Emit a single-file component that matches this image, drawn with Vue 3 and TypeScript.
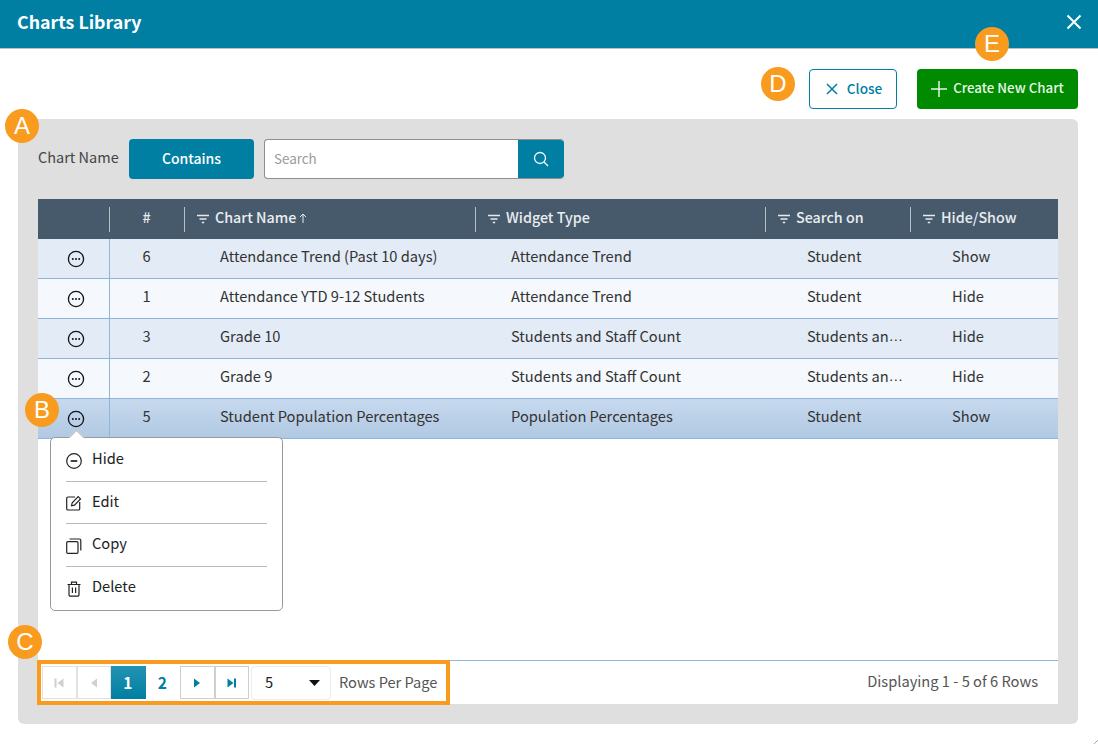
<script setup lang="ts">
interface Row { id: number; name: string; widget: string; search: string; more?: boolean; vis: string; selected?: boolean }
const rows: Row[] = [
  { id: 6, name: 'Attendance Trend (Past 10 days)', widget: 'Attendance Trend', search: 'Student', vis: 'Show' },
  { id: 1, name: 'Attendance YTD 9-12 Students', widget: 'Attendance Trend', search: 'Student', vis: 'Hide' },
  { id: 3, name: 'Grade 10', widget: 'Students and Staff Count', search: 'Students an', more: true, vis: 'Hide' },
  { id: 2, name: 'Grade 9', widget: 'Students and Staff Count', search: 'Students an', more: true, vis: 'Hide' },
  { id: 5, name: 'Student Population Percentages', widget: 'Population Percentages', search: 'Student', vis: 'Show', selected: true },
]
const headers = [
  { label: 'Chart Name', sort: true },
  { label: 'Widget Type' },
  { label: 'Search on' },
  { label: 'Hide/Show' },
]
const badges = ['a', 'b', 'c', 'd', 'e']
</script>

<template>
  <div class="page">
    <header class="titlebar">
      <h1 class="title">Charts Library</h1>
      <svg class="x" width="16" height="16" viewBox="0 0 16 16"><path d="M1.5 1.5l13 13M14.5 1.5l-13 13" stroke="#fff" stroke-width="2" fill="none"/></svg>
    </header>

    <div class="actions">
      <button class="btn-close">
        <svg width="12" height="12" viewBox="0 0 12 12"><path d="M1 1l10 10M11 1L1 11" stroke="#007fa3" stroke-width="1.5" fill="none"/></svg>
        <span>Close</span>
      </button>
      <button class="btn-create">
        <svg width="16" height="16" viewBox="0 0 16 16"><path d="M8 0v16M0 8h16" stroke="#e8f4e8" stroke-width="1.5" fill="none"/></svg>
        <span>Create New Chart</span>
      </button>
    </div>

    <section class="panel">
      <div class="filter">
        <span class="filter-label">Chart Name</span>
        <button class="contains">Contains</button>
        <div class="search">
          <span class="placeholder">Search</span>
          <span class="search-btn">
            <svg width="16" height="16" viewBox="0 0 16 16" fill="none" stroke="#fff" stroke-width="1.3"><circle cx="7" cy="7" r="5.5"/><path d="M11 11l4 4"/></svg>
          </span>
        </div>
      </div>

      <div class="table">
        <div class="thead">
          <div class="th th-first"></div>
          <div class="th th-num"><span class="sep"></span>#</div>
          <div v-for="h in headers" :key="h.label" class="th th-label">
            <span class="sep"></span>
            <svg class="filter-ico" width="12" height="10" viewBox="0 0 12 10" fill="none" stroke="#e6eaee" stroke-width="1.3"><path d="M0 1.5h12M2.5 5h7M4.8 8.5h2.4"/></svg>
            <span>{{ h.label }}</span>
            <svg v-if="h.sort" class="sort-ico" width="8" height="10" viewBox="0 0 8 10" fill="none" stroke="#e6eaee" stroke-width="1"><path d="M4 10V1M1 4l3-3 3 3"/></svg>
          </div>
        </div>

        <div v-for="(r, i) in rows" :key="r.id" class="tr" :class="{ odd: i % 2 === 0, selected: r.selected }">
          <div class="td td-first">
            <svg width="18" height="18" viewBox="0 0 18 18" fill="none"><circle cx="9" cy="9" r="7.6" stroke="#111" stroke-width="1.3"/><circle cx="5.8" cy="9" r="1" fill="#111"/><circle cx="9" cy="9" r="1" fill="#111"/><circle cx="12.2" cy="9" r="1" fill="#111"/></svg>
          </div>
          <div class="td td-num">{{ r.id }}</div>
          <div class="td td-name">{{ r.name }}</div>
          <div class="td td-widget">{{ r.widget }}</div>
          <div class="td td-search">{{ r.search }}<span v-if="r.more" class="ell">…</span></div>
          <div class="td td-vis">{{ r.vis }}</div>
        </div>

        <div class="spacer"></div>

        <div class="tfoot">
          <div class="pager">
            <span class="pg dis">
              <svg width="10" height="10" viewBox="0 0 10 10" fill="#d0d0d0"><rect x="0.5" y="0.5" width="2" height="9"/><path d="M9.5 0.5v9L3.5 5z"/></svg>
            </span>
            <span class="pg dis">
              <svg width="10" height="10" viewBox="0 0 10 10" fill="#d0d0d0"><path d="M8 0.5v9L2 5z"/></svg>
            </span>
            <span class="num active">1</span>
            <span class="num">2</span>
            <span class="pg on">
              <svg width="10" height="10" viewBox="0 0 10 10" fill="#007fa3"><path d="M2 0.5v9L8 5z"/></svg>
            </span>
            <span class="pg on">
              <svg width="10" height="10" viewBox="0 0 10 10" fill="#007fa3"><path d="M0.5 0.5v9l6-4.500z"/><rect x="7" y="0.5" width="2" height="9"/></svg>
            </span>
            <span class="select">
              <span>5</span>
              <svg width="11" height="6" viewBox="0 0 11 6" fill="#111"><path d="M0 0h11L5.500 6z"/></svg>
            </span>
            <span class="rpp">Rows Per Page</span>
          </div>
          <span class="displaying">Displaying 1 - 5 of 6 Rows</span>
        </div>

        <div class="menu">
          <span class="arrow"></span>
          <div class="mi">
            <svg width="16" height="16" viewBox="0 0 16 16" fill="none" stroke="#222" stroke-width="1.2"><circle cx="8" cy="8" r="7.300"/><path d="M4.700 8h6.600" stroke-width="1.700"/></svg>
            <span>Hide</span>
          </div>
          <div class="mi edit">
            <svg width="16" height="16" viewBox="0 0 16 16" fill="none" stroke="#222" stroke-width="1.2"><path d="M9 2H2A1.300 1.300 0 0 0 .7 3.300v10.400A1.300 1.300 0 0 0 2 15h10.400a1.300 1.300 0 0 0 1.300-1.300V7"/><path d="M5.500 10.800l.7-3 6-6.200 2.300 2.300-6 6.200z"/></svg>
            <span>Edit</span>
          </div>
          <div class="mi">
            <svg width="16" height="16" viewBox="0 0 16 16" fill="none" stroke="#222" stroke-width="1.2"><rect x=".7" y="3.600" width="11.300" height="11.800" rx="1.200"/><path d="M3.500 1h10a1.300 1.300 0 0 1 1.300 1.300v10.300"/></svg>
            <span>Copy</span>
          </div>
          <div class="mi">
            <svg width="16" height="16" viewBox="0 0 16 16" fill="none" stroke="#222" stroke-width="1.2"><path d="M1.500 3.500h13M5.500 3.500V1.200h5v2.300M3 3.500v10.300a1.400 1.400 0 0 0 1.400 1.400h7.200a1.400 1.400 0 0 0 1.400-1.400V3.500M6.400 6.500v5.600M9.600 6.500v5.600"/></svg>
            <span>Delete</span>
          </div>
        </div>
      </div>
    </section>

    <div class="highlight"></div>
    <span v-for="b in badges" :key="b" class="badge" :class="b">{{ b.toUpperCase() }}</span>
    <svg class="grip" width="4" height="4" viewBox="0 0 4 4"><path d="M0 4L4 0" stroke="#aaa" stroke-width="1"/></svg>
  </div>
</template>

<style>
html, body { margin: 0; background: #fff; }
</style>

<style scoped>
.page {
  position: relative;
  width: 1098px;
  height: 744px;
  overflow: hidden;
  background: #fff;
  font-family: "Noto Sans CJK SC", "Noto Sans", sans-serif;
  font-size: 14.67px;
  color: #333;
  box-sizing: border-box;
}
.titlebar {
  background: #007fa3;
  border-bottom: 1px solid #bdbdbd;
  display: flex;
  align-items: center;
  justify-content: space-between;
  padding: 0 16px 3px 17px;
  height: 45px;
}
.title { margin: 0 0 1px; font-size: 17.8px; font-weight: 700; color: #fff; line-height: 1; }
.x { display: block; margin-top: -2px; }
.actions {
  display: flex;
  justify-content: flex-end;
  gap: 20px;
  padding: 20px 20px 10px 0;
}
button { font-family: inherit; cursor: pointer; }
.btn-close {
  width: 88px; height: 40px;
  box-sizing: border-box;
  background: #fff;
  border: 1px solid #007fa3;
  border-radius: 4px;
  color: #007fa3;
  font-size: 13.6px;
  font-weight: 500;
  display: flex; align-items: center; justify-content: center; gap: 9px;
  padding: 0 0 3px 2px;
}
.btn-close svg { margin-top: 3px; }
.btn-create {
  width: 161px; height: 40px;
  box-sizing: border-box;
  background: #008a00;
  border: none;
  border-radius: 4px;
  color: #e8f7e8;
  font-size: 13.3px;
  font-weight: 500;
  display: flex; align-items: center; justify-content: center; gap: 6px;
  padding: 0 0 4px;
}
.btn-create svg { margin-top: 4px; }
.panel {
  margin: 0 20px 0 18px;
  height: 605px;
  box-sizing: border-box;
  background: #dfdfdf;
  border-radius: 6px;
  padding: 20px;
  display: flex;
  flex-direction: column;
  gap: 20px;
}
.filter { display: flex; align-items: center; height: 40px; }
.filter-label { width: 81px; white-space: nowrap; color: #444; margin-right: 10px; margin-top: -5px; font-size: 14.5px; }
.contains {
  width: 125px; height: 40px;
  background: #007fa3; border: none; border-radius: 4px;
  color: #fff; font-size: 14px; font-weight: 500; padding: 0 0 2px;
  margin-right: 10px;
}
.search {
  width: 300px; height: 40px; box-sizing: border-box;
  display: flex; align-items: stretch;
  background: #fff;
  border: 1px solid #8e8e8e;
  border-right: none;
  border-radius: 4px;
  overflow: hidden;
}
.placeholder { flex: 1; line-height: 36px; padding-left: 9px; color: #9a9a9a; font-size: 13.4px; }
.search-btn {
  width: 46px; background: #007fa3;
  display: flex; align-items: center; justify-content: center;
  margin: -1px 0;
}
.table {
  position: relative;
  flex: 1;
  background: #fff;
  display: flex;
  flex-direction: column;
}
.thead, .tr {
  display: grid;
  grid-template-columns: 72px 75px 291px 290px 145px 147px;
}
.thead { height: 40px; background: #475a6c; color: #e9edf0; font-weight: 500; font-size: 14.3px; }
.th { position: relative; display: flex; align-items: center; padding-bottom: 5px; box-sizing: border-box; }
.sep { position: absolute; left: -1px; top: 8px; bottom: 7px; width: 1px; background: #b6bec6; }
.th-num { justify-content: center; padding-right: 2px; }
.th-label { padding-left: 12px; }
.filter-ico { margin-right: 6px; margin-top: 5px; }
.sort-ico { margin-left: 3px; margin-top: 3px; }
.tr { height: 40px; box-sizing: border-box; border-bottom: 1px solid #8fb5da; background: #f5f9fd; color: #333; }
.tr.odd { background: #e3ebf6; }
.tr.selected { background: linear-gradient(#c6d9ee, #b1c9e3); }
.td { display: flex; align-items: center; padding-bottom: 6px; box-sizing: border-box; min-width: 0; white-space: nowrap; }
.td-first { justify-content: center; border-right: 1px solid #8fb5da; padding: 1px 0 0 4px; }
.td-num { justify-content: center; padding-right: 2px; }
.td-name, .td-widget { padding-left: 35px; }
.td-search, .td-vis { padding-left: 41px; }
.ell { font-family: "Liberation Sans", sans-serif; }
.spacer { flex: 1; }
.tfoot {
  height: 44px;
  box-sizing: border-box;
  border-top: 1px solid #8fb5da;
  display: flex;
  align-items: center;
  justify-content: space-between;
  padding: 0 20px 2px 4px;
}
.pager { display: flex; align-items: center; height: 34px; margin-top: 2px; }
.pg, .num {
  width: 34.500px; height: 33px; box-sizing: border-box;
  display: flex; align-items: center; justify-content: center;
}
.pg { border: 1px solid #e2e2e2; }
.pg.on { border-color: #cfcfcf; }
.num { font-weight: 700; font-size: 15.500px; color: #007fa3; padding: 0 1px 2px 0; }
.num.active { color: #fff; background: linear-gradient(#2492b2, #007fa3); }
.select {
  width: 80px; height: 34px; box-sizing: border-box;
  margin-left: 2px;
  border: 1px solid #ececec; border-radius: 4px;
  display: flex; align-items: center; justify-content: space-between;
  padding: 0 10px 2px 13px;
  color: #222;
}
.select svg { margin-top: 2px; }
.rpp { margin: -3px 0 0 8px; color: #555; font-size: 14.6px; }
.displaying { color: #555; margin-bottom: 2px; }
.menu {
  position: absolute;
  left: 12px; top: 238px;
  width: 233px; height: 174px;
  box-sizing: border-box;
  background: #fff;
  border: 1px solid #999;
  border-radius: 5px;
  padding: 1px 15px 0;
  color: #222;
}
.arrow {
  position: absolute; left: 20px; top: -6px;
  width: 11px; height: 11px;
  background: #fff;
  transform: rotate(45deg);
  border-left: 1px solid #bbb;
  border-top: 1px solid #bbb;
  box-sizing: border-box;
}
.mi {
  position: relative;
  height: 42.600px;
  box-sizing: border-box;
  display: flex; align-items: center; gap: 10px;
  border-bottom: 1px solid #bbb;
}
.mi:last-child { border-bottom: none; }
.mi span { margin-top: -5px; }
.mi.edit span { margin-top: -3px; }
.mi svg { flex: none; margin-top: 2px; }
.highlight {
  position: absolute;
  left: 37px; top: 660px;
  width: 413px; height: 45px;
  box-sizing: border-box;
  border: 4px solid #f99b1e;
  pointer-events: none;
}
.badge {
  position: absolute;
  width: 34px; height: 34px;
  border-radius: 50%;
  background: #f99b1e;
  color: #fff;
  font-family: "Liberation Sans", Arial, sans-serif;
  font-size: 24px;
  line-height: 34px;
  text-align: center;
}
.badge.a { left: 5px; top: 109px; }
.badge.b { left: 25px; top: 393px; }
.badge.c { left: 8px; top: 625px; }
.badge.d { left: 761px; top: 67px; }
.badge.e { left: 975px; top: 27px; }
.grip { position: absolute; right: 0; bottom: 0; }
</style>
